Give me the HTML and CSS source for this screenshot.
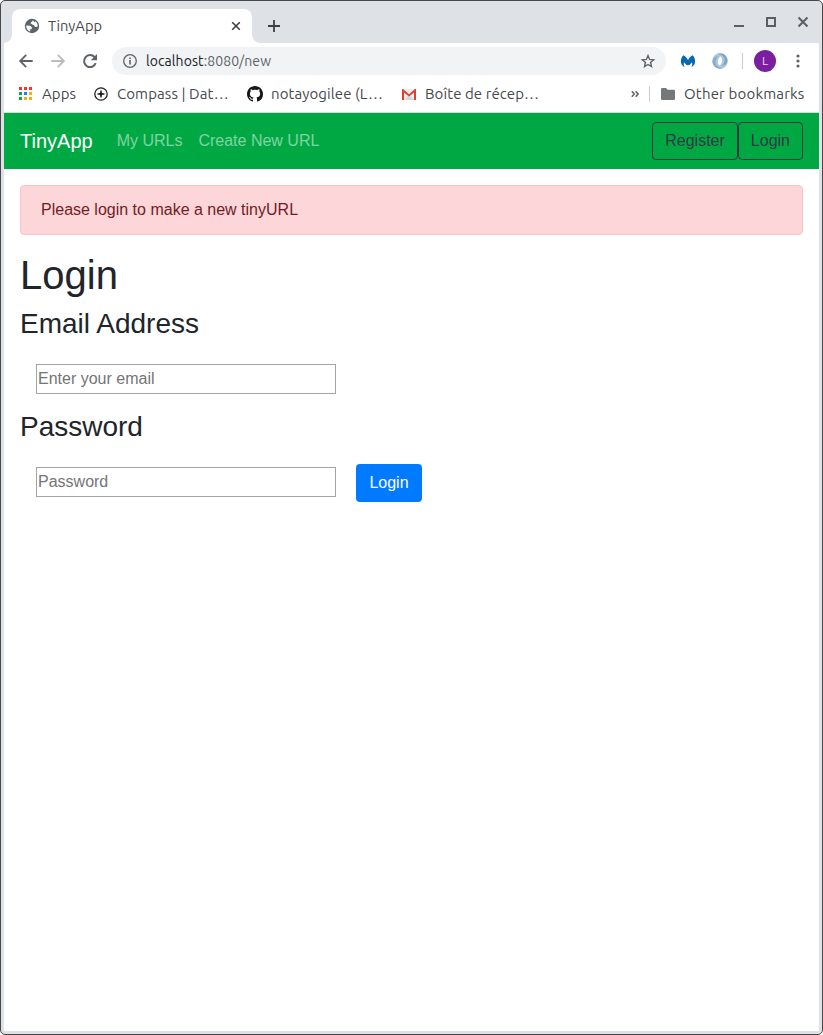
FILE: index.html
```html
<!DOCTYPE html>
<html lang="en">
<head>
<meta charset="utf-8">
<title>TinyApp</title>
<link rel="stylesheet" href="styles.css">
</head>
<body>
<div class="window">
  <header class="tabstrip">
    <div class="tab">
      <svg class="tab-icon" width="16" height="16" viewBox="0 0 16 16"><circle cx="8" cy="8" r="7.2" fill="#5f6368"/><path d="M8.8 2.2 C8.6 3.8 6.700 3.700 6.600 5.200 L8.200 6.500 10 7.200 11 9 13.600 8.800 C13.900 7 13.200 4.600 11.600 3.300 L10.600 4.200z M2.200 7.400 L6 7.800 8 9.600 7.600 11 6 11.400 6.300 13.600 C3.700 12.600 1.900 10.200 2.200 7.400z" fill="#fff"/></svg>
      <span class="tab-title">TinyApp</span>
      <svg class="tab-close" width="10" height="10" viewBox="0 0 10 10"><path d="M1.2 1.2l7.600 7.600M8.800 1.200L1.200 8.800" stroke="#3c4043" stroke-width="1.6"/></svg>
    </div>
    <svg class="new-tab" width="14" height="14" viewBox="0 0 14 14"><path d="M7 1v12M1 7h12" stroke="#3c4043" stroke-width="1.8"/></svg>
    <div class="controls">
      <svg width="12" height="12" viewBox="0 0 12 12"><path d="M1 10h10" stroke="#5b5e63" stroke-width="2"/></svg>
      <svg width="12" height="12" viewBox="0 0 12 12"><path d="M2 2h8v8H2z" fill="none" stroke="#5b5e63" stroke-width="2"/></svg>
      <svg width="12" height="12" viewBox="0 0 12 12"><path d="M1.500 1.500l9 9M10.500 1.500l-9 9" stroke="#5b5e63" stroke-width="2"/></svg>
    </div>
  </header>
  <div class="toolbar">
    <svg width="16" height="16" viewBox="0 0 16 16"><path d="M14.700 8H2M8.200 1.900L2.100 8 8.200 14.100" fill="none" stroke="#5f6368" stroke-width="1.8"/></svg>
    <svg width="16" height="16" viewBox="0 0 16 16"><path d="M1.300 8H14M7.800 1.900L13.900 8 7.800 14.100" fill="none" stroke="#babcbe" stroke-width="1.800"/></svg>
    <svg width="16" height="16" viewBox="0 0 16 16"><path d="M13.700 10.200A6 6 0 1 1 12.500 4L13.300 5" fill="none" stroke="#5f6368" stroke-width="2"/><path d="M15 1v6.200H8.800z" fill="#5f6368"/></svg>
    <div class="omnibox">
      <svg width="14" height="14" viewBox="0 0 14 14"><circle cx="7" cy="7" r="6.300" fill="none" stroke="#5f6368" stroke-width="1.300"/><path d="M7 6v4.500M7 3.400V5" stroke="#5f6368" stroke-width="1.600"/></svg>
      <span class="url"><b class="host">localhost</b>:8080/new</span>
      <svg class="star" width="16" height="16" viewBox="0 0 16 16"><path d="M8 2.600l1.600 3.800 4.100.4-3.100 2.700.9 4.100L8 11.500l-3.500 2.100.9-4.100-3.100-2.700 4.100-.4z" fill="none" stroke="#5f6368" stroke-width="1.400"/></svg>
    </div>
    <svg class="malware" width="16" height="16" viewBox="0 0 16 16"><path d="M3.200 2.200C5.300 3 7 4.800 8 7.200 9 4.800 10.700 3 12.800 2.200 15 4.800 15.700 8.200 14.600 11 13.900 12.500 12.900 13.500 11.300 13.900 12.500 12.300 12.500 10.800 11.900 9.200 11 10.800 9.700 11.900 8 12.200 6.300 11.900 5 10.800 4.100 9.200 3.500 10.800 3.500 12.300 4.700 13.900 3.100 13.500 2.100 12.500 1.400 11 .3 8.200 1 4.800 3.200 2.200z" fill="#0768b6"/></svg>
    <svg class="swirl" width="16" height="16" viewBox="0 0 16 16"><circle cx="8" cy="8" r="7.800" fill="#a9c6dc"/><path d="M5 1C11 1 14.500 5 11.500 11L10 13C16 12 17 5.500 13 2.200 11 .5 7.500-.3 5 1z" fill="#7da5c6"/><path d="M11 15C5 15 1.500 11 4.500 5L6 3C0 4-1 10.500 3 13.800 5 15.500 8.500 16.300 11 15z" fill="#86abc9"/><path d="M8.300 3.300C11 5.400 10.800 9.500 7.700 12.700 4.800 10.500 5.200 6.300 8.300 3.300z" fill="#fff"/></svg>
    <i class="rule"></i>
    <span class="avatar">L</span>
    <svg class="kebab" width="4" height="14" viewBox="0 0 4 14"><g fill="#5f6368"><circle cx="2" cy="2" r="1.600"/><circle cx="2" cy="7" r="1.600"/><circle cx="2" cy="12" r="1.600"/></g></svg>
  </div>
  <div class="bookmarks">
    <svg class="apps-icon" width="14" height="14" viewBox="0 0 14 14"><path d="M0 0h3v3H0zM5 0h3v3H5zM10 0h3v3h-3z" fill="#f5332c"/><path d="M0 5h3v3H0zM0 10h3v3H0z" fill="#12a05c"/><path d="M5 5h3v3H5z" fill="#1e82f0"/><path d="M10 5h3v3h-3zM5 10h3v3H5zM10 10h3v3h-3z" fill="#faab0a"/></svg>
    <span class="bm bm-apps">Apps</span>
    <svg class="compass-icon" width="14" height="14" viewBox="0 0 14 14"><circle cx="7" cy="7" r="6.200" fill="none" stroke="#202124" stroke-width="1.300"/><path d="M7 3l1 3 3 1-3 1-1 3-1-3-3-1 3-1z" fill="#202124"/><path d="M7 3.500v7M3.500 7h7" stroke="#202124"/></svg>
    <span class="bm bm-compass">Compass | Dat…</span>
    <svg class="github-icon" width="16" height="16" viewBox="0 0 16 16"><path fill="#191717" d="M8 0C3.580 0 0 3.580 0 8c0 3.540 2.290 6.530 5.470 7.590.4.070.55-.17.55-.38 0-.19-.01-.82-.01-1.490-2.010.37-2.530-.49-2.690-.94-.09-.23-.48-.94-.82-1.130-.28-.15-.68-.52-.01-.53.63-.01 1.080.58 1.230.82.72 1.210 1.870.87 2.330.66.07-.52.28-.87.51-1.070-1.780-.2-3.640-.89-3.640-3.950 0-.87.31-1.590.82-2.150-.08-.2-.36-1.020.08-2.120 0 0 .67-.21 2.200.82.64-.18 1.320-.27 2-.27s1.360.09 2 .27c1.530-1.040 2.200-.82 2.200-.82.44 1.100.16 1.920.08 2.120.51.56.82 1.270.82 2.150 0 3.070-1.870 3.750-3.650 3.950.29.25.54.73.54 1.480 0 1.070-.01 1.930-.01 2.200 0 .21.15.46.55.38A8.010 8.010 0 0 0 16 8c0-4.420-3.580-8-8-8z"/></svg>
    <span class="bm bm-github">notayogilee (L…</span>
    <svg class="gmail-icon" width="14" height="12" viewBox="0 0 14 12"><path d="M0 1h14v11H0z" fill="#ececec"/><path d="M2 12l5-5 5 5z" fill="#d8d8d8"/><path d="M0 12V1h1L7 6.200 13 1h1v11h-2V4.500L7 8.600 2 4.500V12z" fill="#df4034"/></svg>
    <span class="bm bm-gmail">Boîte de récep…</span>
    <svg class="more" width="8" height="8" viewBox="0 0 8 8"><path d="M.8 1.300L3.300 4 .8 6.700M4.600 1.300L7.100 4 4.600 6.700" fill="none" stroke="#5f6368" stroke-width="1.500"/></svg>
    <i class="rule"></i>
    <svg class="folder" width="14" height="12" viewBox="0 0 14 12"><path d="M1.200 0H5l1.600 1.700h6.200Q14 1.700 14 3v7.700Q14 12 12.800 12H1.200Q0 12 0 10.700V1.300Q0 0 1.200 0z" fill="#75787b"/></svg>
    <span class="bm bm-other">Other bookmarks</span>
  </div>
  <main class="page">
    <nav class="navbar">
      <a class="brand">TinyApp</a>
      <a class="nav-link">My URLs</a>
      <a class="nav-link">Create New URL</a>
      <div class="nav-actions"><button class="btn btn-outline">Register</button><button class="btn btn-outline">Login</button></div>
    </nav>
    <div class="alert">Please login to make a new tinyURL</div>
    <form class="login">
      <h1>Login</h1>
      <h3>Email Address</h3>
      <div class="field"><input type="email" placeholder="Enter your email"></div>
      <h3>Password</h3>
      <div class="field"><input type="password" placeholder="Password"><button type="button" class="btn btn-primary">Login</button></div>
    </form>
  </main>
</div>
</body>
</html>
```
FILE: styles.css
```css
* { box-sizing: border-box; }
body { margin: 0; background: #fff; font-family: "Liberation Sans", Arial, sans-serif; font-size: 16px; line-height: 24px; color: #212529; }
svg { display: block; flex: none; }

/* Browser window */
.window { display: flex; flex-direction: column; width: 823px; height: 1035px; border: 1px solid #47474a; border-radius: 5px; padding: 0 3px 3px; background: #dee1e6; overflow: hidden; }
.tabstrip, .toolbar, .bookmarks { display: flex; align-items: center; flex: none; font-family: Ubuntu, "Noto Sans", sans-serif; color: #45494d; }
.tabstrip { height: 42px; }
.tab { position: relative; display: flex; align-items: center; align-self: flex-end; width: 240px; height: 34px; margin-left: 8px; padding: 0 11px 0 12px; border-radius: 8px 8px 0 0; background: #fff; }
.tab::before, .tab::after { content: ""; position: absolute; bottom: 0; width: 8px; height: 8px; }
.tab::before { left: -8px; background: radial-gradient(circle at 0 0, transparent 7.5px, #fff 8px); }
.tab::after { right: -8px; background: radial-gradient(circle at 100% 0, transparent 7.5px, #fff 8px); }
.tab-title { margin-left: 8px; font-size: 14.67px; }
.tab-close { margin-left: auto; }
.new-tab { margin: 8px 0 0 15px; }
.controls { display: flex; gap: 20px; margin: 0 10px 0 auto; }
.toolbar { height: 36px; background: #fff; padding: 0 19.5px 0 14px; }
.toolbar > svg + svg { margin-left: 16px; }
.omnibox { display: flex; align-items: center; width: 554px; height: 28px; margin-left: 14px; padding: 0 10px 0 11px; border-radius: 14px; background: #f1f3f4; }
.url { margin-left: 9px; font-size: 14px; letter-spacing: .08px; color: #5f6368; white-space: nowrap; }
.host { font-weight: 400; color: #202124; }
.star { margin-left: auto; }
.malware { margin-left: 14px; }
.rule { flex: none; width: 1px; height: 16px; background: #c8cacd; }
.toolbar .rule { margin-left: 14px; }
.avatar { width: 22px; height: 22px; margin-left: 11px; border-radius: 50%; background: #7b1fa2; color: #e9d5f0; font: 12px/22px Ubuntu, "Noto Sans", sans-serif; text-align: center; }
.toolbar .kebab { margin-left: auto; }
.bookmarks { height: 34px; padding: 0 14px 4px 15px; border-bottom: 1px solid #d8dade; background: #fff; }
.bm { font-size: 15px; letter-spacing: .08px; white-space: nowrap; flex: none; }
.bm-apps { width: 52px; margin-left: 9px; }
.bm-compass { width: 130px; margin-left: 9px; }
.bm-github { width: 131px; margin-left: 8px; }
.bm-gmail { margin-left: 9px; }
.more { margin-left: auto; }
.bookmarks .rule { margin-left: 10px; }
.folder { margin-left: 11px; }
.bm-other { width: 121px; margin-left: 9px; letter-spacing: .18px; }

/* Page */
.page { flex: 1; background: #fff; }
.navbar { display: flex; align-items: center; height: 56px; padding: 8px 16px; background: #00a844; }
.brand { margin-right: 16px; font-size: 20px; line-height: 30px; color: #fff; }
.nav-link { padding: 8px; color: rgba(255, 255, 255, .5); }
.nav-actions { display: flex; margin-left: auto; }
.btn { height: 38px; padding: 6px 12px; border: 1px solid transparent; border-radius: 4px; font: 16px/24px "Liberation Sans", Arial, sans-serif; }
.btn-outline { border-color: #343a40; background: transparent; color: #343a40; }
.btn-primary { width: 66px; margin: 0 0 -2px 20px; background: #007bff; color: #fff; }
.alert { margin: 16px; padding: 12px 20px; border: 1px solid #f9c5cb; border-radius: 4px; background: #fcd6d9; color: #721c24; }
.login { padding: 0 16px; }
h1, h3 { margin: 0 0 8px; font-weight: 500; line-height: 1.2; }
h1 { font-size: 40px; }
h3 { font-size: 28px; }
.field { display: flex; align-items: center; height: 61.4px; padding-left: 16px; }
.field input { width: 300px; height: 30px; padding: 1px; border: 1px solid #a5a5a5; background: #fff; font: 16px/24px "Liberation Sans", Arial, sans-serif; }
.field input::placeholder { color: #757575; opacity: 1; }
```
